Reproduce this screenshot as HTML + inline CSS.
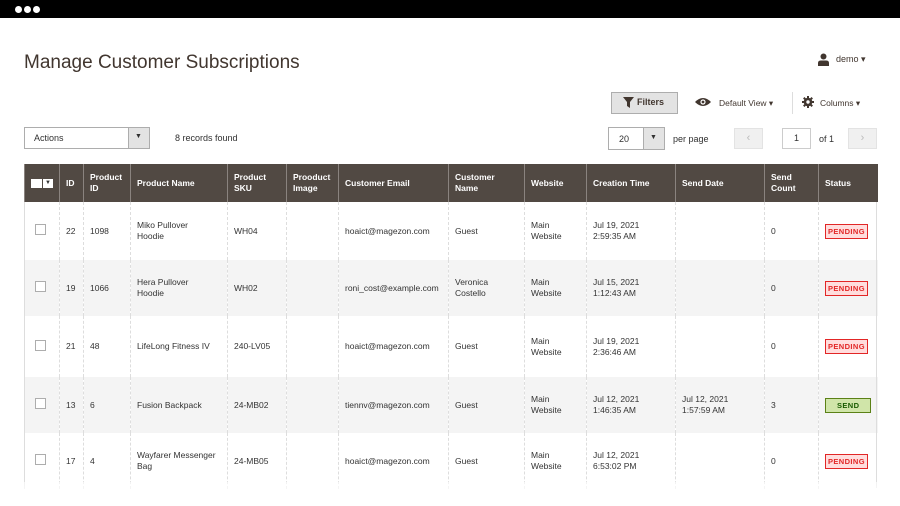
<!DOCTYPE html>
<html><head><meta charset="utf-8"><style>
*{margin:0;padding:0;box-sizing:border-box}
body{width:900px;height:506px;overflow:hidden;background:#fff;font-family:"Liberation Sans",sans-serif;color:#303030;position:relative}
.top{position:absolute;left:0;top:0;width:900px;height:18px;background:#000}
.dot{position:absolute;top:6px;width:7px;height:7px;border-radius:50%;background:#fff}
.a{position:absolute;white-space:nowrap}
h1{position:absolute;left:24px;top:52px;font-size:19px;font-weight:normal;color:#41362f}
.btn{position:absolute;border:1px solid #adadad;background:#e3e3e3}
.sel{position:absolute;border:1px solid #adadad;background:#fff}
table{position:absolute;left:24px;top:164px;width:853px;border-collapse:collapse;table-layout:fixed;font-size:8.5px}
th{background:#514943;color:#fff;font-weight:bold;text-align:left;padding:0 6px;height:38px;border-left:1px solid #8a837f;line-height:11px;font-size:8.5px;overflow:hidden}
td{padding:0 6px;border-left:1px dashed #ddd;line-height:11px;color:#333;vertical-align:middle;overflow:hidden}
tr.g td{background:#f4f4f4}
.cb{width:11px;height:11px;border:1px solid #adadad;background:#fff;display:inline-block;margin-left:4px}
.pend{display:inline-block;border:1px solid #e22626;background:#fdd;color:#e22626;font-weight:bold;font-size:7.5px;padding:1px 2px;letter-spacing:.4px}
.send{display:inline-block;border:1px solid #5b8116;background:#d0e5a9;color:#185b00;font-weight:bold;font-size:7.5px;padding:1px 11px;letter-spacing:.4px}
.fade{position:absolute;left:0;top:482px;width:900px;height:24px;background:linear-gradient(rgba(255,255,255,.6),#fff)}
</style></head><body>
<div class="top"><div class="dot" style="left:15px"></div><div class="dot" style="left:24px"></div><div class="dot" style="left:33px"></div></div>
<h1>Manage Customer Subscriptions</h1>
<svg class="a" style="left:817px;top:53px" width="13" height="13" viewBox="0 0 13 13"><circle cx="6.5" cy="3.5" r="3" fill="#41362f"/><path d="M1 13V10Q1 7.5 4 7.5H9Q12 7.5 12 10V13Z" fill="#41362f"/></svg>
<div class="a" style="left:836px;top:54px;font-size:9px;color:#41362f">demo &#9662;</div>
<div class="btn" style="left:611px;top:92px;width:67px;height:22px"></div>
<svg class="a" style="left:623px;top:97px" width="11" height="11" viewBox="0 0 11 11"><path d="M0 0H11L7 5V11L4 9V5Z" fill="#41362f"/></svg>
<div class="a" style="left:637px;top:97px;font-size:9px;font-weight:bold;color:#41362f">Filters</div>
<svg class="a" style="left:695px;top:97px" width="16" height="10" viewBox="0 0 16 10"><path d="M0 5Q8 -3 16 5Q8 13 0 5Z" fill="#41362f"/><circle cx="8" cy="5" r="2.6" fill="#fff"/><circle cx="8" cy="5" r="1.4" fill="#41362f"/></svg>
<div class="a" style="left:719px;top:98px;font-size:8.5px;color:#41362f">Default View &#9662;</div>
<div class="a" style="left:792px;top:92px;width:1px;height:22px;background:#ddd"></div>
<svg class="a" style="left:802px;top:96px" width="12" height="12" viewBox="0 0 12 12"><circle cx="6" cy="6" r="4.3" fill="#41362f"/><path d="M5 0H7V12H5ZM0 5H12V7H0Z" fill="#41362f"/><path d="M5 0H7V12H5ZM0 5H12V7H0Z" fill="#41362f" transform="rotate(45 6 6)"/><circle cx="6" cy="6" r="1.7" fill="#fff"/></svg>
<div class="a" style="left:820px;top:98px;font-size:8.5px;color:#41362f">Columns &#9662;</div>
<div class="sel" style="left:24px;top:127px;width:126px;height:22px"></div>
<div class="a" style="left:128px;top:128px;width:21px;height:20px;background:#e3e3e3;border-left:1px solid #adadad"></div>
<div class="a" style="left:34px;top:133px;font-size:9px">Actions</div>
<div class="a" style="left:135px;top:133px;font-size:7px">&#9660;</div>
<div class="a" style="left:175px;top:133px;font-size:9px">8 records found</div>
<div class="sel" style="left:608px;top:127px;width:57px;height:23px"></div>
<div class="a" style="left:643px;top:128px;width:21px;height:21px;background:#e3e3e3;border-left:1px solid #adadad"></div>
<div class="a" style="left:619px;top:134px;font-size:9px">20</div>
<div class="a" style="left:650px;top:134px;font-size:7px">&#9660;</div>
<div class="a" style="left:673px;top:134px;font-size:9px">per page</div>
<div class="a" style="left:734px;top:128px;width:29px;height:21px;background:#f0f0f0;border:1px solid #e3e3e3;color:#bbb;font-size:11px;text-align:center;line-height:19px">&lsaquo;</div>
<div class="sel" style="left:782px;top:128px;width:29px;height:21px;border-color:#ccc;font-size:9px;text-align:center;line-height:19px">1</div>
<div class="a" style="left:819px;top:134px;font-size:9px">of 1</div>
<div class="a" style="left:848px;top:128px;width:29px;height:21px;background:#f0f0f0;border:1px solid #e3e3e3;color:#bbb;font-size:11px;text-align:center;line-height:19px">&rsaquo;</div>
<table>
<colgroup><col style="width:35px"><col style="width:24px"><col style="width:47px"><col style="width:97px"><col style="width:59px"><col style="width:52px"><col style="width:110px"><col style="width:76px"><col style="width:62px"><col style="width:89px"><col style="width:89px"><col style="width:54px"><col style="width:59px"></colgroup>
<tr><th style="padding:0 6px"><span style="display:inline-block;width:11px;height:9px;background:#fff;vertical-align:middle"></span><span style="display:inline-block;width:10px;height:9px;background:#fff;color:#333;font-size:6px;line-height:9px;text-align:center;margin-left:1px;vertical-align:middle">&#9660;</span></th><th>ID</th><th>Product ID</th><th>Product Name</th><th>Product SKU</th><th>Prooduct Image</th><th>Customer Email</th><th>Customer Name</th><th>Website</th><th>Creation Time</th><th>Send Date</th><th>Send Count</th><th>Status</th></tr>
<tr style="height:58px"><td><span class="cb"></span></td><td>22</td><td>1098</td><td>Miko Pullover<br>Hoodie</td><td>WH04</td><td></td><td>hoaict@magezon.com</td><td>Guest</td><td>Main Website</td><td>Jul 19, 2021<br>2:59:35 AM</td><td></td><td>0</td><td><span class="pend">PENDING</span></td></tr>
<tr class="g" style="height:56px"><td><span class="cb"></span></td><td>19</td><td>1066</td><td>Hera Pullover<br>Hoodie</td><td>WH02</td><td></td><td>roni_cost@example.com</td><td>Veronica Costello</td><td>Main Website</td><td>Jul 15, 2021<br>1:12:43 AM</td><td></td><td>0</td><td><span class="pend">PENDING</span></td></tr>
<tr style="height:61px"><td><span class="cb"></span></td><td>21</td><td>48</td><td>LifeLong Fitness IV</td><td>240-LV05</td><td></td><td>hoaict@magezon.com</td><td>Guest</td><td>Main Website</td><td>Jul 19, 2021<br>2:36:46 AM</td><td></td><td>0</td><td><span class="pend">PENDING</span></td></tr>
<tr class="g" style="height:56px"><td><span class="cb"></span></td><td>13</td><td>6</td><td>Fusion Backpack</td><td>24-MB02</td><td></td><td>tiennv@magezon.com</td><td>Guest</td><td>Main Website</td><td>Jul 12, 2021<br>1:46:35 AM</td><td>Jul 12, 2021<br>1:57:59 AM</td><td>3</td><td><span class="send">SEND</span></td></tr>
<tr style="height:56px"><td><span class="cb"></span></td><td>17</td><td>4</td><td>Wayfarer Messenger<br>Bag</td><td>24-MB05</td><td></td><td>hoaict@magezon.com</td><td>Guest</td><td>Main Website</td><td>Jul 12, 2021<br>6:53:02 PM</td><td></td><td>0</td><td><span class="pend">PENDING</span></td></tr>
</table>
<div class="a" style="left:876px;top:202px;width:1px;height:286px;background:#ddd"></div>
<div class="a" style="left:24px;top:202px;width:1px;height:286px;background:#ddd"></div>
<div class="fade"></div>
</body></html>
